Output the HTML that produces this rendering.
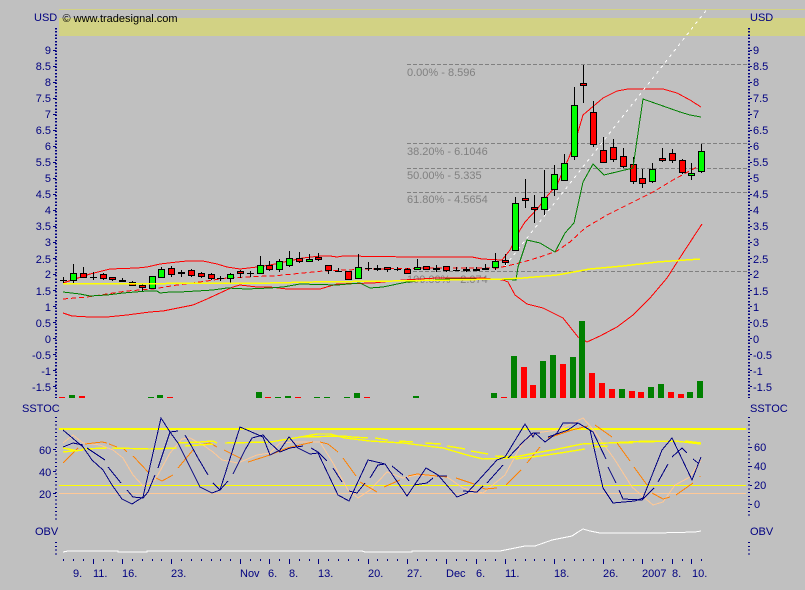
<!DOCTYPE html>
<html><head><meta charset="utf-8"><title>Chart</title>
<style>
html,body{margin:0;padding:0;background:#c0c0c0;width:805px;height:590px;overflow:hidden}
svg{display:block}
text{font-family:"Liberation Sans",sans-serif;font-size:11px}
.a{fill:#000080}
.f{fill:#808080}
polyline,path{fill:none;shape-rendering:crispEdges}
rect{shape-rendering:crispEdges}
</style></head><body>
<svg width="805" height="590" viewBox="0 0 805 590" xmlns="http://www.w3.org/2000/svg">
<rect width="805" height="590" fill="#c0c0c0"/>
<rect x="59" y="9" width="746" height="1" fill="#d2d284"/>
<rect x="59" y="18" width="746" height="18" fill="#d2d284"/>
<text x="62.5" y="22" fill="#000">© www.tradesignal.com</text>

<!-- fib labels -->
<g class="f">
<text class="f" x="407" y="76">0.00% - 8.596</text>
<text class="f" x="407" y="155">38.20% - 6.1046</text>
<text class="f" x="407" y="179">50.00% - 5.335</text>
<text class="f" x="407" y="203">61.80% - 4.5654</text>
<text class="f" x="407" y="283">100.00% - 2.074</text>
</g>

<!-- fib lines -->
<path stroke="#808080" stroke-dasharray="4 2" d="M407 64.5H749M407 143.5H749M407 168.5H749M407 192.5H749M413 271.5H749"/>

<!-- bollinger -->
<g stroke="#ff0000" stroke-width="1">
<polyline points="63,283 90,274 110,269 137,268 147,267 160,264 177,262 187,261 203,261 217,264 227,267 240,269 257,267 270,265 303,258 320,256 330,256 337,257 343,256 413,257 472,257 482,259 502,260 510,250 520,230 525,222 538,208 548,195 557,185 570,155 578,132 583,115 603,98 617,91 628,89 663,89 677,93 690,100 701,107" fill="none"/>
<polyline stroke-dasharray="5 3" points="63,299 87,297 100,295 127,291 153,289 177,285 200,282 227,278 267,276 273,276 303,273 323,271 370,269 437,268 497,268 507,266 523,262 540,257 557,251 570,242 585,228 607,215 633,202 653,192 673,180 697,167" fill="none"/>
<polyline points="63,313 72,316 90,317 107,317 127,315 150,312 163,311 173,309 193,305 207,299 220,293 233,287 240,285 257,287 270,287 287,289 320,289 337,284 373,283 403,280 437,278 483,278 503,280 508,282 515,295 527,304 543,308 563,318 578,337 587,342 600,336 617,327 633,315 650,298 667,278 683,253 702,224" fill="none"/>
</g>
<polyline stroke="#ffffff" stroke-dasharray="3 4" points="505,266 708,8"/>

<!-- wicks -->
<path stroke="#000" d="M63.5 277V283M73.5 264V283M83.5 267V278M93.5 272V280M103.5 273V280M112.5 277V281M122.5 278V282M132.5 281V286M142.5 283V291M152.5 276V289M161.5 267V278M171.5 266V277M181.5 270V277M191.5 269V277M201.5 272V278M211.5 273V280M220.5 276V281M230.5 273V283M240.5 270V278M250.5 271V277M260.5 256V274M269.5 261V271M279.5 259V272M289.5 251V267M299.5 252V263M309.5 254V262M318.5 253V261M328.5 265V274M338.5 268V272M348.5 271V280M358.5 254V279M368.5 262V271M377.5 265V271M387.5 267V272M397.5 267V271M407.5 268V274M417.5 259V270M426.5 267V270M436.5 265V272M446.5 267V272M456.5 267V271M466.5 267V272M476.5 267V271M485.5 264V270M495.5 253V270M505.5 254V265M515.5 197V251M525.5 179V208M534.5 195V223M544.5 170V215M554.5 165V196M564.5 154V181M574.5 87V160M583.5 65V103M593.5 101V147M603.5 137V163M613.5 139V162M623.5 148V168M633.5 157V184M642.5 169V188M652.5 163V183M662.5 148V162M672.5 149V163M682.5 159V174M691.5 163V180M701.5 144V173M60 280.5h7M90 277.5h7M217 278.5h7M247 273.5h7M335 271.5h7M365 268.5h7M394 269.5h7M453 270.5h7"/>
<path fill="#000" style="fill:#000" d="M119 280h7v2h-7zM178 272h7v2h-7zM374 268h7v2h-7zM433 268h7v2h-7zM463 269h7v2h-7zM473 269h7v2h-7zM482 268h7v2h-7z"/>
<!-- green bodies -->
<path style="fill:#00ff00" stroke="#000" d="M70.5 273.5h6v7h-6zM149.5 276.5h6v12h-6zM158.5 269.5h6v8h-6zM227.5 274.5h6v4h-6zM257.5 265.5h6v8h-6zM276.5 261.5h6v8h-6zM286.5 258.5h6v7h-6zM306.5 259.5h6v2h-6zM355.5 267.5h6v11h-6zM414.5 267.5h6v2h-6zM492.5 261.5h6v6h-6zM512.5 203.5h6v47h-6zM541.5 197.5h6v12h-6zM551.5 174.5h6v15h-6zM561.5 163.5h6v17h-6zM571.5 105.5h6v51h-6zM649.5 169.5h6v12h-6zM688.5 173.5h6v2h-6zM698.5 151.5h6v20h-6z"/>
<!-- red bodies -->
<path style="fill:#ff0000" stroke="#000" d="M80.5 273.5h6v4h-6zM100.5 274.5h6v4h-6zM109.5 277.5h6v2h-6zM129.5 282.5h6v3h-6zM139.5 285.5h6v2h-6zM168.5 268.5h6v6h-6zM188.5 270.5h6v5h-6zM198.5 273.5h6v3h-6zM208.5 274.5h6v4h-6zM237.5 271.5h6v2h-6zM266.5 265.5h6v4h-6zM296.5 258.5h6v3h-6zM315.5 257.5h6v2h-6zM325.5 265.5h6v5h-6zM345.5 271.5h6v8h-6zM384.5 267.5h6v2h-6zM404.5 269.5h6v4h-6zM423.5 266.5h6v3h-6zM443.5 266.5h6v4h-6zM502.5 260.5h6v2h-6zM522.5 198.5h6v2h-6zM531.5 207.5h6v2h-6zM580.5 83.5h6v2h-6zM590.5 112.5h6v32h-6zM600.5 150.5h6v12h-6zM610.5 147.5h6v12h-6zM620.5 156.5h6v10h-6zM630.5 164.5h6v17h-6zM639.5 178.5h6v5h-6zM659.5 158.5h6v2h-6zM669.5 153.5h6v7h-6zM679.5 160.5h6v12h-6z"/>

<!-- green band line over candles -->
<polyline stroke="#008000" points="63,292 80,294 90,296 107,295 123,293 147,291 157,291 160,293 170,292 180,292 197,291 213,290 227,288 247,289 270,288 283,287 300,284 337,285 360,283 370,288 383,287 407,282 430,280 450,279 500,279 516,280 518,267 527,240 540,243 555,252 565,233 574,223 583,182 593,164 604,175 633,168 637,140 643,99 663,106 680,112 690,115 701,117"/>

<!-- overlay yellow MA -->
<polyline stroke="#ffff00" stroke-width="1.5" points="63,284 270,283 313,282 393,281 450,280 503,279 523,278 557,275 590,269 623,266 657,262 700,259"/>

<!-- volume -->
<path style="fill:#008000" d="M69 395h6v3h-6zM157 395h6v3h-6zM256 392h6v6h-6zM285 396h6v2h-6zM354 393h6v5h-6zM413 396h6v2h-6zM491 393h6v5h-6zM511 356h6v42h-6zM540 361h6v37h-6zM550 355h6v43h-6zM570 357h6v41h-6zM579 321h6v77h-6zM619 389h6v9h-6zM648 387h6v11h-6zM658 384h6v14h-6zM687 392h6v6h-6zM697 381h6v17h-6zM148 397h6v1h-6zM275 397h6v1h-6zM314 397h6v1h-6zM324 397h6v1h-6zM344 397h6v1h-6z"/>
<path style="fill:#ff0000" d="M59 397h6v1h-6zM79 396h6v2h-6zM167 397h6v1h-6zM265 397h6v1h-6zM295 397h6v1h-6zM364 397h6v1h-6zM501 397h6v1h-6zM521 367h6v31h-6zM530 385h6v13h-6zM560 364h6v34h-6zM589 373h6v25h-6zM599 383h6v15h-6zM609 389h6v9h-6zM629 391h6v7h-6zM638 392h6v6h-6zM668 392h6v6h-6zM678 394h6v4h-6z"/>

<!-- axes upper -->
<path stroke="#000080" stroke-width="2" stroke-dasharray="1.5 1.71" d="M56 28V398M749 28V398"/>
<path stroke="#000080" d="M53 50.5h3M53 66.5h3M53 82.5h3M53 98.5h3M53 114.5h3M53 130.5h3M53 146.5h3M53 162.5h3M53 178.5h3M53 194.5h3M53 210.5h3M53 226.5h3M53 242.5h3M53 258.5h3M53 274.5h3M53 290.5h3M53 306.5h3M53 322.5h3M53 338.5h3M53 354.5h3M53 370.5h3M53 386.5h3M750 50.5h2M750 66.5h2M750 82.5h2M750 98.5h2M750 114.5h2M750 130.5h2M750 146.5h2M750 162.5h2M750 178.5h2M750 194.5h2M750 210.5h2M750 226.5h2M750 242.5h2M750 258.5h2M750 274.5h2M750 290.5h2M750 306.5h2M750 322.5h2M750 338.5h2M750 354.5h2M750 370.5h2M750 386.5h2"/>
<g class="a">
<text class="a" x="34" y="21">USD</text>
<text class="a" x="750" y="21">USD</text>
<g text-anchor="end">
<text class="a" x="51" y="54">9</text><text class="a" x="51" y="70">8.5</text><text class="a" x="51" y="86">8</text><text class="a" x="51" y="102">7.5</text><text class="a" x="51" y="118">7</text><text class="a" x="51" y="134">6.5</text><text class="a" x="51" y="150">6</text><text class="a" x="51" y="166">5.5</text><text class="a" x="51" y="182">5</text><text class="a" x="51" y="198">4.5</text><text class="a" x="51" y="214">4</text><text class="a" x="51" y="230">3.5</text><text class="a" x="51" y="246">3</text><text class="a" x="51" y="263">2.5</text><text class="a" x="51" y="278">2</text><text class="a" x="51" y="295">1.5</text><text class="a" x="51" y="311">1</text><text class="a" x="51" y="327">0.5</text><text class="a" x="51" y="343">0</text><text class="a" x="51" y="359">-0.5</text><text class="a" x="51" y="375">-1</text><text class="a" x="51" y="391">-1.5</text>
</g>
<text class="a" x="753" y="54">9</text><text class="a" x="753" y="70">8.5</text><text class="a" x="753" y="86">8</text><text class="a" x="753" y="102">7.5</text><text class="a" x="753" y="118">7</text><text class="a" x="753" y="134">6.5</text><text class="a" x="753" y="150">6</text><text class="a" x="753" y="166">5.5</text><text class="a" x="753" y="182">5</text><text class="a" x="753" y="198">4.5</text><text class="a" x="753" y="214">4</text><text class="a" x="753" y="230">3.5</text><text class="a" x="753" y="246">3</text><text class="a" x="753" y="263">2.5</text><text class="a" x="753" y="278">2</text><text class="a" x="753" y="295">1.5</text><text class="a" x="753" y="311">1</text><text class="a" x="753" y="327">0.5</text><text class="a" x="753" y="343">0</text><text class="a" x="753" y="359">-0.5</text><text class="a" x="753" y="375">-1</text><text class="a" x="753" y="391">-1.5</text>

<text class="a" x="22" y="412">SSTOC</text>
<text class="a" x="750" y="412">SSTOC</text>
<text class="a" x="35" y="535">OBV</text>
<text class="a" x="750" y="535">OBV</text>
<text class="a" x="39" y="454">60</text><text class="a" x="39" y="476">40</text><text class="a" x="39" y="498">20</text>
<text class="a" x="754" y="451">60</text><text class="a" x="754" y="470">40</text><text class="a" x="754" y="489">20</text><text class="a" x="754" y="508">0</text>

<text class="a" x="73" y="577">9.</text><text class="a" x="93" y="577">11.</text><text class="a" x="122" y="577">16.</text><text class="a" x="171" y="577">23.</text><text class="a" x="240" y="577">Nov</text><text class="a" x="268" y="577">6.</text><text class="a" x="289" y="577">8.</text><text class="a" x="318" y="577">13.</text><text class="a" x="368" y="577">20.</text><text class="a" x="407" y="577">27.</text><text class="a" x="446" y="577">Dec</text><text class="a" x="476" y="577">6.</text><text class="a" x="505" y="577">11.</text><text class="a" x="554" y="577">18.</text><text class="a" x="603" y="577">26.</text><text class="a" x="642" y="577">2007</text><text class="a" x="672" y="577">8.</text><text class="a" x="692" y="577">10.</text>
</g>

<!-- lower axes -->
<path stroke="#000080" stroke-width="2" stroke-dasharray="1 2.75" d="M56 417V521M749 417V518"/>
<path stroke="#000080" stroke-width="2" stroke-dasharray="1 2.75" d="M56 542V555M749 542V555"/>
<path stroke="#000080" d="M53 449.5h3M53 471.5h3M53 493.5h3M750 447.5h2M750 466.5h2M750 485.5h2M750 504.5h2"/>
<!-- x ticks -->
<path stroke="#000080" d="M63.5 559v2M83.5 559v2M103.5 559v2M112.5 559v2M132.5 559v2M142.5 559v2M152.5 559v2M161.5 559v2M181.5 559v2M191.5 559v2M201.5 559v2M211.5 559v2M220.5 559v2M230.5 559v2M250.5 559v2M260.5 559v2M279.5 559v2M299.5 559v2M309.5 559v2M328.5 559v2M338.5 559v2M348.5 559v2M358.5 559v2M377.5 559v2M387.5 559v2M397.5 559v2M417.5 559v2M426.5 559v2M436.5 559v2M456.5 559v2M466.5 559v2M485.5 559v2M495.5 559v2M515.5 559v2M525.5 559v2M534.5 559v2M544.5 559v2M564.5 559v2M574.5 559v2M583.5 559v2M593.5 559v2M613.5 559v2M623.5 559v2M633.5 559v2M652.5 559v2M662.5 559v2M682.5 559v2M701.5 559v2M73.5 559v2M93.5 559v5M122.5 559v5M171.5 559v5M240.5 559v5M269.5 559v5M289.5 559v5M318.5 559v5M368.5 559v5M407.5 559v5M446.5 559v5M476.5 559v5M505.5 559v5M554.5 559v5M603.5 559v5M642.5 559v5M672.5 559v5M691.5 559v5"/>

<!-- stochastic panel -->
<rect x="59" y="428" width="687" height="2" fill="#ffff00"/>
<rect x="59" y="485" width="687" height="1" fill="#ffff00"/>
<rect x="59" y="493" width="687" height="1" fill="#ffc896"/>

<polyline stroke="#ffc896" points="63,443 73,435 83,443 100,445 113,450 123,458 133,475 143,486 155,480 170,453 182,439 190,438 203,445 213,452 222,460 238,463 257,455 270,453 280,443 295,442 320,442 333,463 348,490 358,498 370,490 387,472 403,478 417,475 447,477 463,488 483,493 505,475 523,442 535,433 558,430 583,418 592,428 615,460 632,487 653,505 663,502 675,485 690,477 701,460"/>

<path stroke="#ff8000" d="M63 463L78 448M85 444L102 442L107 443M109 444L117 447M123 448L127 452M133 456L149 473M156 478L162 481L173 475M178 468L193 450M200 445L210 443L217 447M224 450L242 459M248 462L270 455L287 448L313 442M320 442L328 444L338 452M343 458L356 476M360 482L377 492M384 487L400 480M408 476L417 474L447 477M456 478L474 484M480 487L485 489L497 488M506 485L521 470M527 463L540 447M548 438L572 430L588 426M595 425L612 437M617 443L630 461M634 467L647 485M652 493L663 499L670 497M676 495L693 483M700 476v1"/>

<path stroke="#ffff00" stroke-width="1.4" d="M63 448L78 451M63 452L83 450M82 449L107 448M112 448L150 449L177 448M177 443L200 442L213 441L217 443M225 443L270 442L295 438L317 434L330 434L345 438L370 441L403 443L443 448L467 455L483 459L510 458L535 453L558 449L582 444L608 443L648 441L675 441L701 444M185 446L213 444M303 437L343 436L352 437L368 438M375 438L388 440M399 441L413 442M425 443L441 444M447 446L465 449M471 451L488 454M495 456L513 457M515 459L540 456L560 453L585 449M592 447L608 446M618 443L633 443M638 442L675 441M685 441L701 443"/>

<polyline stroke="#000080" points="63,430 83,447 92,460 103,470 112,485 122,499 132,504 143,497 161,418 170,432 178,443 200,487 212,493 220,490 240,427 247,430 263,437 270,455 280,450 289,437 298,448 310,454 318,453 338,495 349,501 368,460 385,464 407,496 426,468 438,475 457,497 467,493 497,460 505,457 525,424 533,437 535,433 545,442 557,433 563,423 578,423 590,430 603,488 613,503 635,501 643,498 662,450 672,438 692,480 701,457"/>
<path stroke="#000080" d="M63 447L73 443L83 445M87 448L105 460M108 467L121 483M127 490L133 497L143 498L148 492M148 492L155 475M158 468L170 432L178 431M185 435L192 447L198 458L208 475M213 483L220 490L228 481M233 474L245 450M245 450L252 438L263 435L270 443M270 443L280 452L290 448L303 446M311 448L318 452L327 461M333 468L342 482M349 491L357 493L365 483M370 478L378 465L385 464M392 466L403 475M406 477L409 481M414 485L427 483L433 478M437 476L447 476M463 491L477 492L483 486M487 483L503 465M508 458L523 442L533 433L540 433M548 437L568 430L578 423L593 432L606 459M608 467L616 483M619 490L623 499L642 500L654 488M658 482L668 464M672 457L682 448L687 453M693 459L698 463"/>

<!-- OBV -->
<polyline stroke="#ffffff" points="63,552 68,551 118,551 118,552 147,552 147,551 352,551 362,551 365,552 412,552 412,551 500,551 505,550 515,548 525,546 535,546 552,540 572,536 578,532 583,529 590,531 600,533 628,533 657,533 695,532 701,531"/>
</svg>
</body></html>
